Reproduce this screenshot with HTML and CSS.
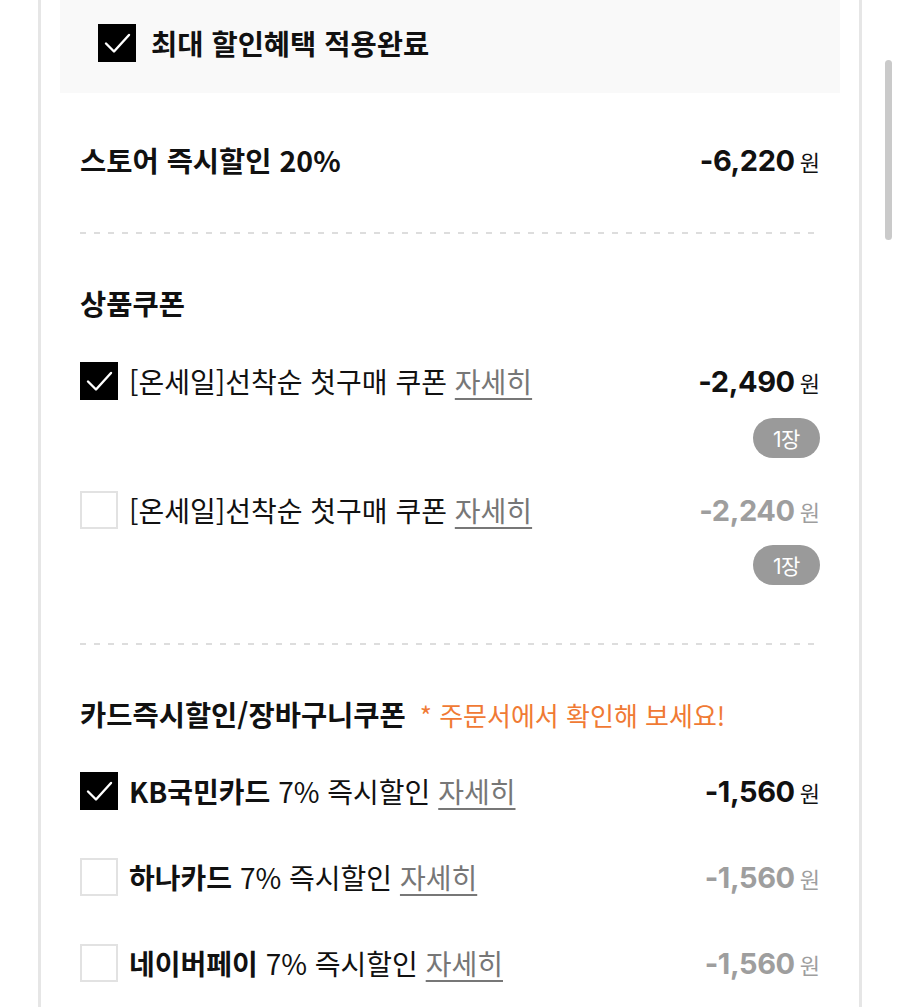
FILE: index.html
```html
<!DOCTYPE html>
<html lang="ko">
<head>
<meta charset="utf-8">
<title>할인혜택</title>
<link rel="stylesheet" href="styles.css">
</head>
<body>
<div class="panel">
  <div class="top-box">
    <span class="cb on"><svg viewBox="0 0 38 38"><path d="M8 19.5 L16 27.5 L31 11" /></svg></span>
    <span class="top-title">최대 할인혜택 적용완료</span>
  </div>
  <div class="content">
    <div class="store-row">
      <span class="h-title">스토어 즉시할인 20%</span>
      <span class="price"><b>-6,220</b><span class="won">원</span></span>
    </div>
    <div class="divider"></div>

    <div class="h-title sec-title">상품쿠폰</div>

    <div class="item first">
      <div class="label">
        <span class="cb on"><svg viewBox="0 0 38 38"><path d="M8 19.5 L16 27.5 L31 11" /></svg></span>
        <span class="txt">[온세일]선착순 첫구매 쿠폰 <a class="more">자세히</a></span>
      </div>
      <span class="price"><b>-2,490</b><span class="won">원</span></span>
    </div>
    <div class="badge-row"><span class="badge">1장</span></div>

    <div class="item second">
      <div class="label">
        <span class="cb"></span>
        <span class="txt">[온세일]선착순 첫구매 쿠폰 <a class="more">자세히</a></span>
      </div>
      <span class="price off"><b>-2,240</b><span class="won">원</span></span>
    </div>
    <div class="badge-row"><span class="badge">1장</span></div>

    <div class="divider second-div"></div>

    <div class="sec-title card-title"><span class="h-title">카드즉시할인/장바구니쿠폰</span><span class="note">* 주문서에서 확인해 보세요!</span></div>

    <div class="item card first-card">
      <div class="label">
        <span class="cb on"><svg viewBox="0 0 38 38"><path d="M8 19.5 L16 27.5 L31 11" /></svg></span>
        <span class="txt"><strong>KB국민카드</strong> 7% 즉시할인 <a class="more">자세히</a></span>
      </div>
      <span class="price"><b>-1,560</b><span class="won">원</span></span>
    </div>
    <div class="item card">
      <div class="label">
        <span class="cb"></span>
        <span class="txt"><strong>하나카드</strong> 7% 즉시할인 <a class="more">자세히</a></span>
      </div>
      <span class="price off"><b>-1,560</b><span class="won">원</span></span>
    </div>
    <div class="item card">
      <div class="label">
        <span class="cb"></span>
        <span class="txt"><strong>네이버페이</strong> 7% 즉시할인 <a class="more">자세히</a></span>
      </div>
      <span class="price off"><b>-1,560</b><span class="won">원</span></span>
    </div>
  </div>
</div>
<div class="scrollbar"></div>
</body>
</html>
```

FILE: styles.css
```css
html, body {
  margin: 0;
  padding: 0;
  background: #fff;
  height: 1007px;
  overflow: hidden;
}
body {
  font-family: "Noto Sans CJK KR", "Noto Sans", sans-serif;
  color: #111;
  position: relative;
}
.panel {
  margin-left: 38px;
  width: 780px;
  min-height: 1007px;
  border-left: 3px solid #e6e6e6;
  border-right: 3px solid #e6e6e6;
  padding: 0 19px;
  box-sizing: content-box;
}
.top-box {
  height: 93px;
  background: #f9f9f9;
  display: flex;
  align-items: center;
  padding-left: 38px;
  box-sizing: border-box;
}
.top-box .cb { margin-top: -8px; }
.top-title {
  font-size: 28.5px;
  font-weight: 700;
  margin-left: 15px;
  margin-top: -8px;
  line-height: 36px;
}
.content {
  padding: 0 20px;
}
.cb {
  width: 38px;
  height: 38px;
  box-sizing: border-box;
  border: 2px solid #e2e2e2;
  background: #fff;
  display: inline-block;
  flex: none;
}
.cb.on {
  background: #000;
  border-color: #000;
}
.cb svg {
  display: block;
  width: 38px;
  height: 38px;
  margin: -2px;
}
.cb svg path {
  fill: none;
  stroke: #fff;
  stroke-width: 2.4;
  stroke-linecap: round;
  stroke-linejoin: round;
}
.h-title {
  font-size: 28.5px;
  font-weight: 700;
  line-height: 36px;
  white-space: nowrap;
}
.store-row {
  height: 134px;
  display: flex;
  align-items: center;
  justify-content: space-between;
}
.divider {
  height: 2px;
  margin-top: 5px;
  background-image: linear-gradient(to right, #dddddd 0 6px, transparent 6px 14px);
  background-size: 14px 2px;
  background-repeat: repeat-x;
}
.sec-title {
  margin-top: 51px;
  height: 36px;
}
.price {
  display: flex;
  align-items: baseline;
  white-space: nowrap;
}
.price b {
  font-family: Inter, "Liberation Sans", sans-serif;
  font-weight: 700;
  font-size: 29px;
  letter-spacing: -0.4px;
  color: #111;
}
.price .won {
  font-size: 22px;
  margin-left: 5px;
  color: #111;
}
.price.off b, .price.off .won {
  color: #9e9e9e;
}
.item {
  display: flex;
  align-items: center;
  justify-content: space-between;
  height: 38px;
}
.item.first { margin-top: 41px; }
.item.second { margin-top: 33px; }
.label {
  display: flex;
  align-items: center;
}
.txt {
  margin-left: 11px;
  font-size: 28px;
  line-height: 36px;
  white-space: nowrap;
}
.txt strong { font-weight: 700; }
.more {
  color: #777;
  text-decoration: underline;
  text-decoration-thickness: 1.5px;
  text-underline-offset: 5px;
}
.badge-row {
  display: flex;
  justify-content: flex-end;
  margin-top: 18px;
}
.badge {
  width: 67px;
  height: 40px;
  border-radius: 20px;
  background: #9a9a9a;
  color: #fff;
  font-family: Inter, "Noto Sans CJK KR", sans-serif;
  font-size: 21px;
  display: flex;
  align-items: center;
  justify-content: center;
  letter-spacing: -0.5px;
}
.second + .badge-row { margin-top: 16px; }
.second-div { margin-top: 58px; }
.card-title {
  display: flex;
  align-items: center;
}
.note {
  color: #f07a34;
  font-size: 26px;
  margin-left: 14px;
  white-space: nowrap;
}
.item.card { margin-top: 48px; }
.item.card.first-card { margin-top: 40px; }
.scrollbar {
  position: absolute;
  left: 885px;
  top: 60px;
  width: 7px;
  height: 180px;
  border-radius: 4px;
  background: #cacaca;
}
```
